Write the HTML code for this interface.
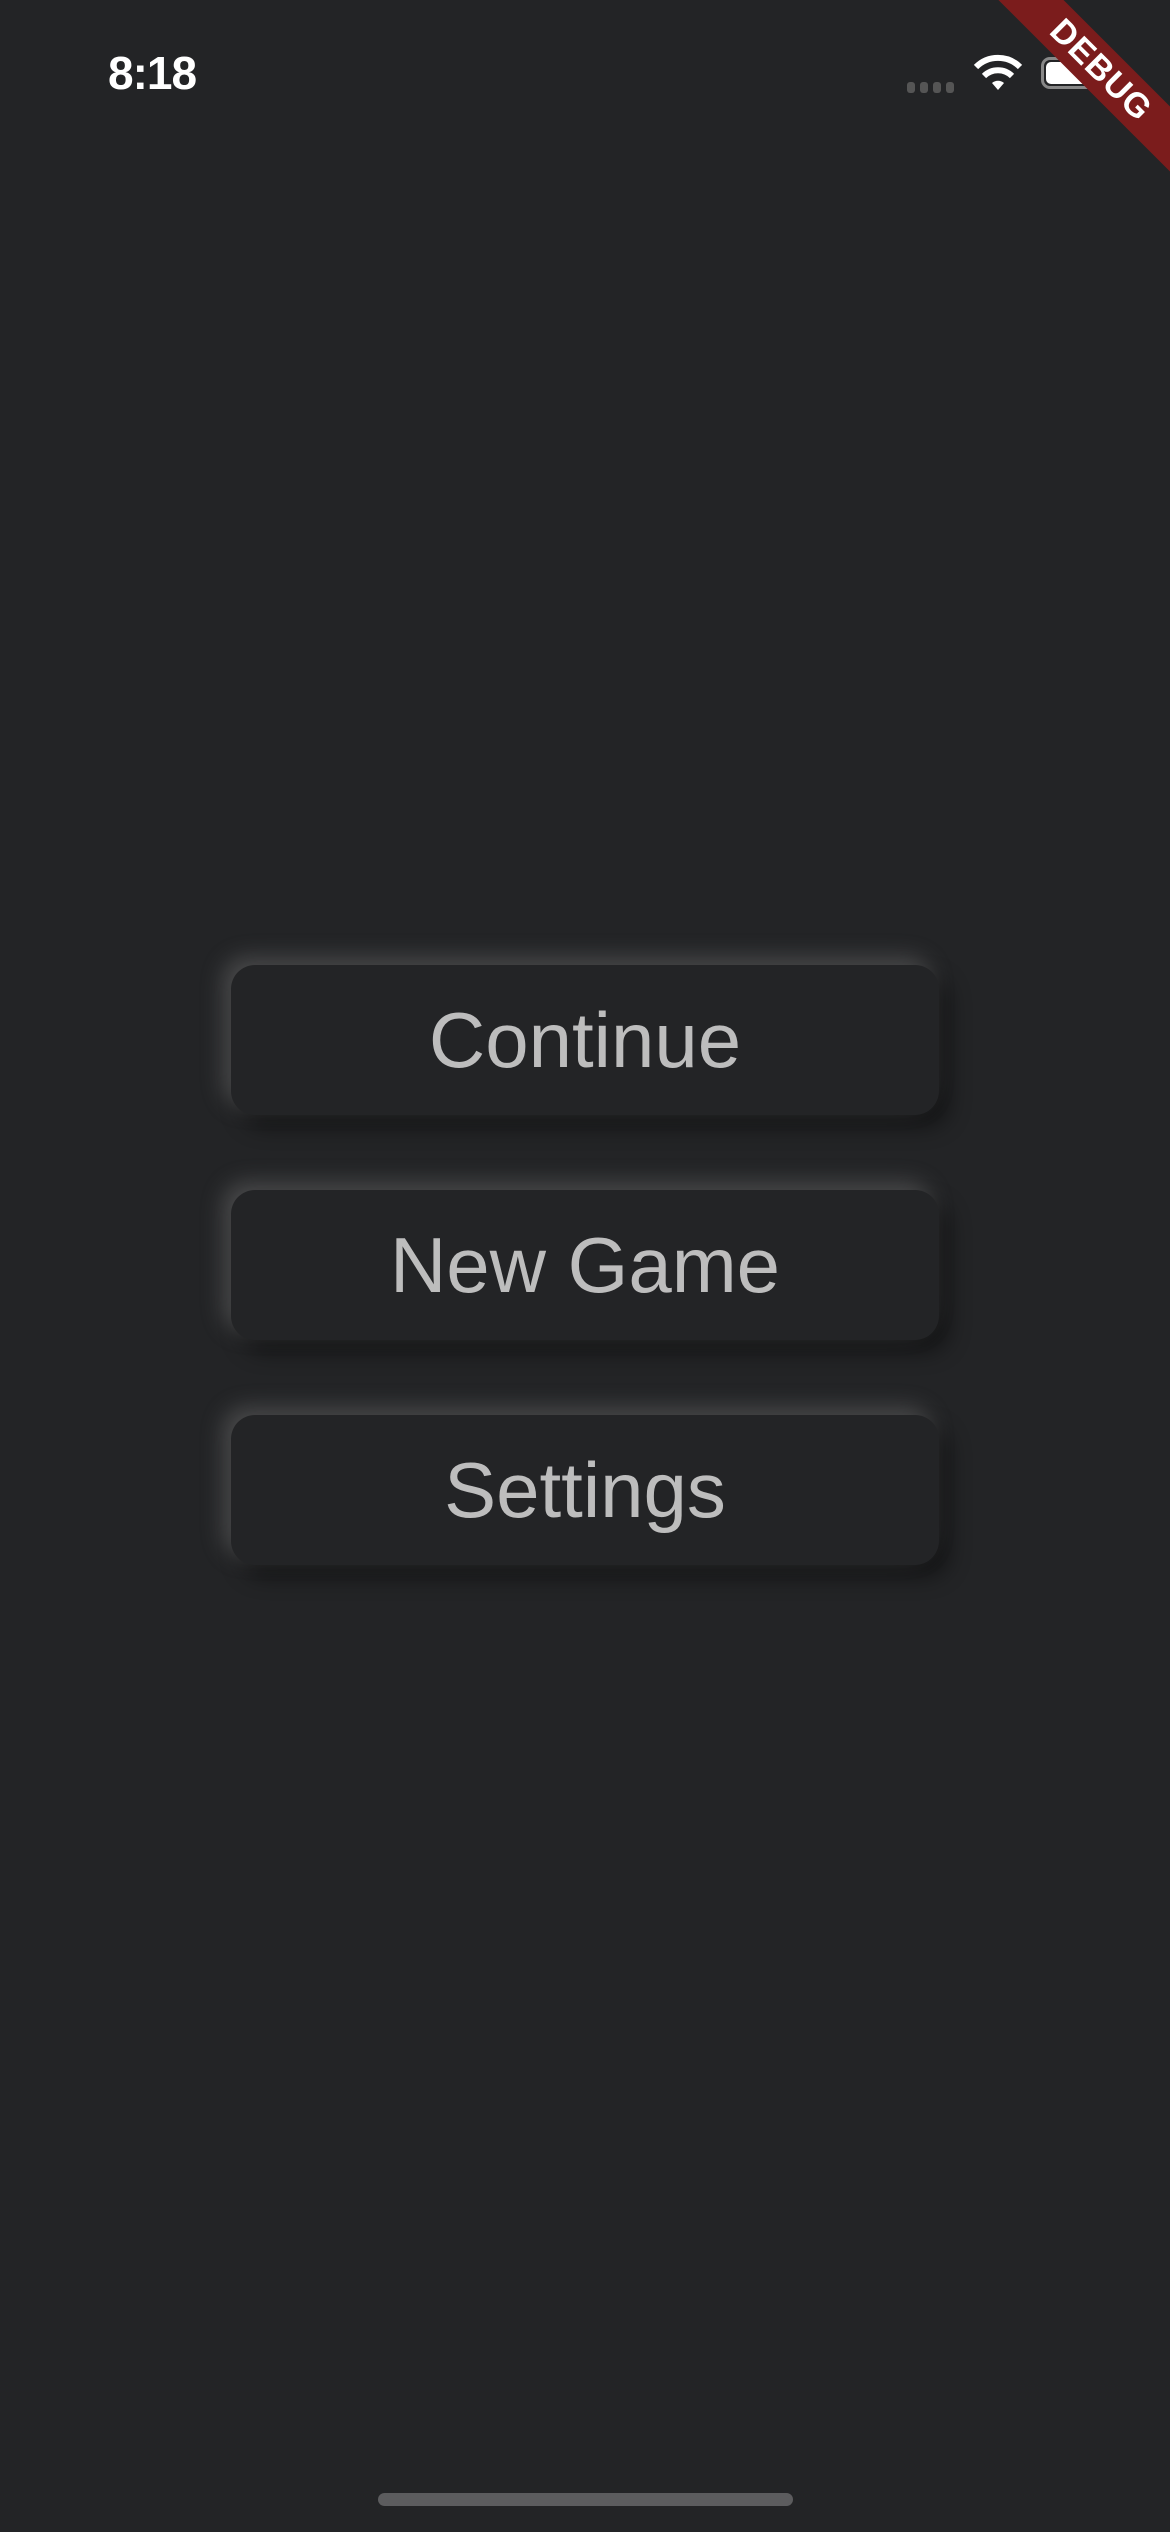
<!DOCTYPE html>
<html><head><meta charset="utf-8"><style>
html,body{margin:0;padding:0;}
body{width:1170px;height:2532px;background:#232426;position:relative;overflow:hidden;font-family:"Liberation Sans",sans-serif;}
.btn{position:absolute;left:231px;width:708px;height:150px;background:#232426;border-radius:24px;
box-shadow:-8px -8px 22px rgba(120,120,120,0.45),10px 12px 22px rgba(0,0,0,0.45);
color:#bdbdbd;font-size:78px;text-align:center;line-height:150px;}
.time{position:absolute;left:108px;top:46px;color:#fff;font-size:46px;font-weight:bold;letter-spacing:-1px;}
.banner{position:absolute;left:951px;top:47px;width:300px;height:46px;background:#7b1c1c;transform:rotate(45deg);
color:#fff;font-weight:bold;font-size:34px;text-align:center;line-height:46px;letter-spacing:1px;}
</style></head><body>
<div class="time">8:18</div>
<div style="position:absolute;left:907px;top:80px;">
<span style="display:inline-block;width:8px;height:11px;border-radius:3px;background:#555;margin-right:5px"></span><span style="display:inline-block;width:8px;height:11px;border-radius:3px;background:#555;margin-right:5px"></span><span style="display:inline-block;width:8px;height:11px;border-radius:3px;background:#555;margin-right:5px"></span><span style="display:inline-block;width:8px;height:11px;border-radius:3px;background:#555"></span>
</div>
<svg style="position:absolute;left:972px;top:54px" width="52" height="38" viewBox="0 0 52 38">
<path d="M26 36 L20 29 A9 9 0 0 1 32 29 Z" fill="#fff"/>
<path d="M12 22 A20 20 0 0 1 40 22" stroke="#fff" stroke-width="6" fill="none"/>
<path d="M4 13 A31 31 0 0 1 48 13" stroke="#fff" stroke-width="6" fill="none"/>
</svg>
<div style="position:absolute;left:1041px;top:57px;width:58px;height:32px;border:3px solid #888;border-radius:9px;box-sizing:border-box"></div>
<div style="position:absolute;left:1046px;top:62px;width:48px;height:22px;background:#fff;border-radius:5px"></div>
<div class="banner">DEBUG</div>
<div class="btn" style="top:965px">Continue</div>
<div class="btn" style="top:1190px">New Game</div>
<div class="btn" style="top:1415px">Settings</div>
<div style="position:absolute;left:378px;top:2493px;width:415px;height:13px;border-radius:7px;background:#5c5c5e"></div>
</body></html>
